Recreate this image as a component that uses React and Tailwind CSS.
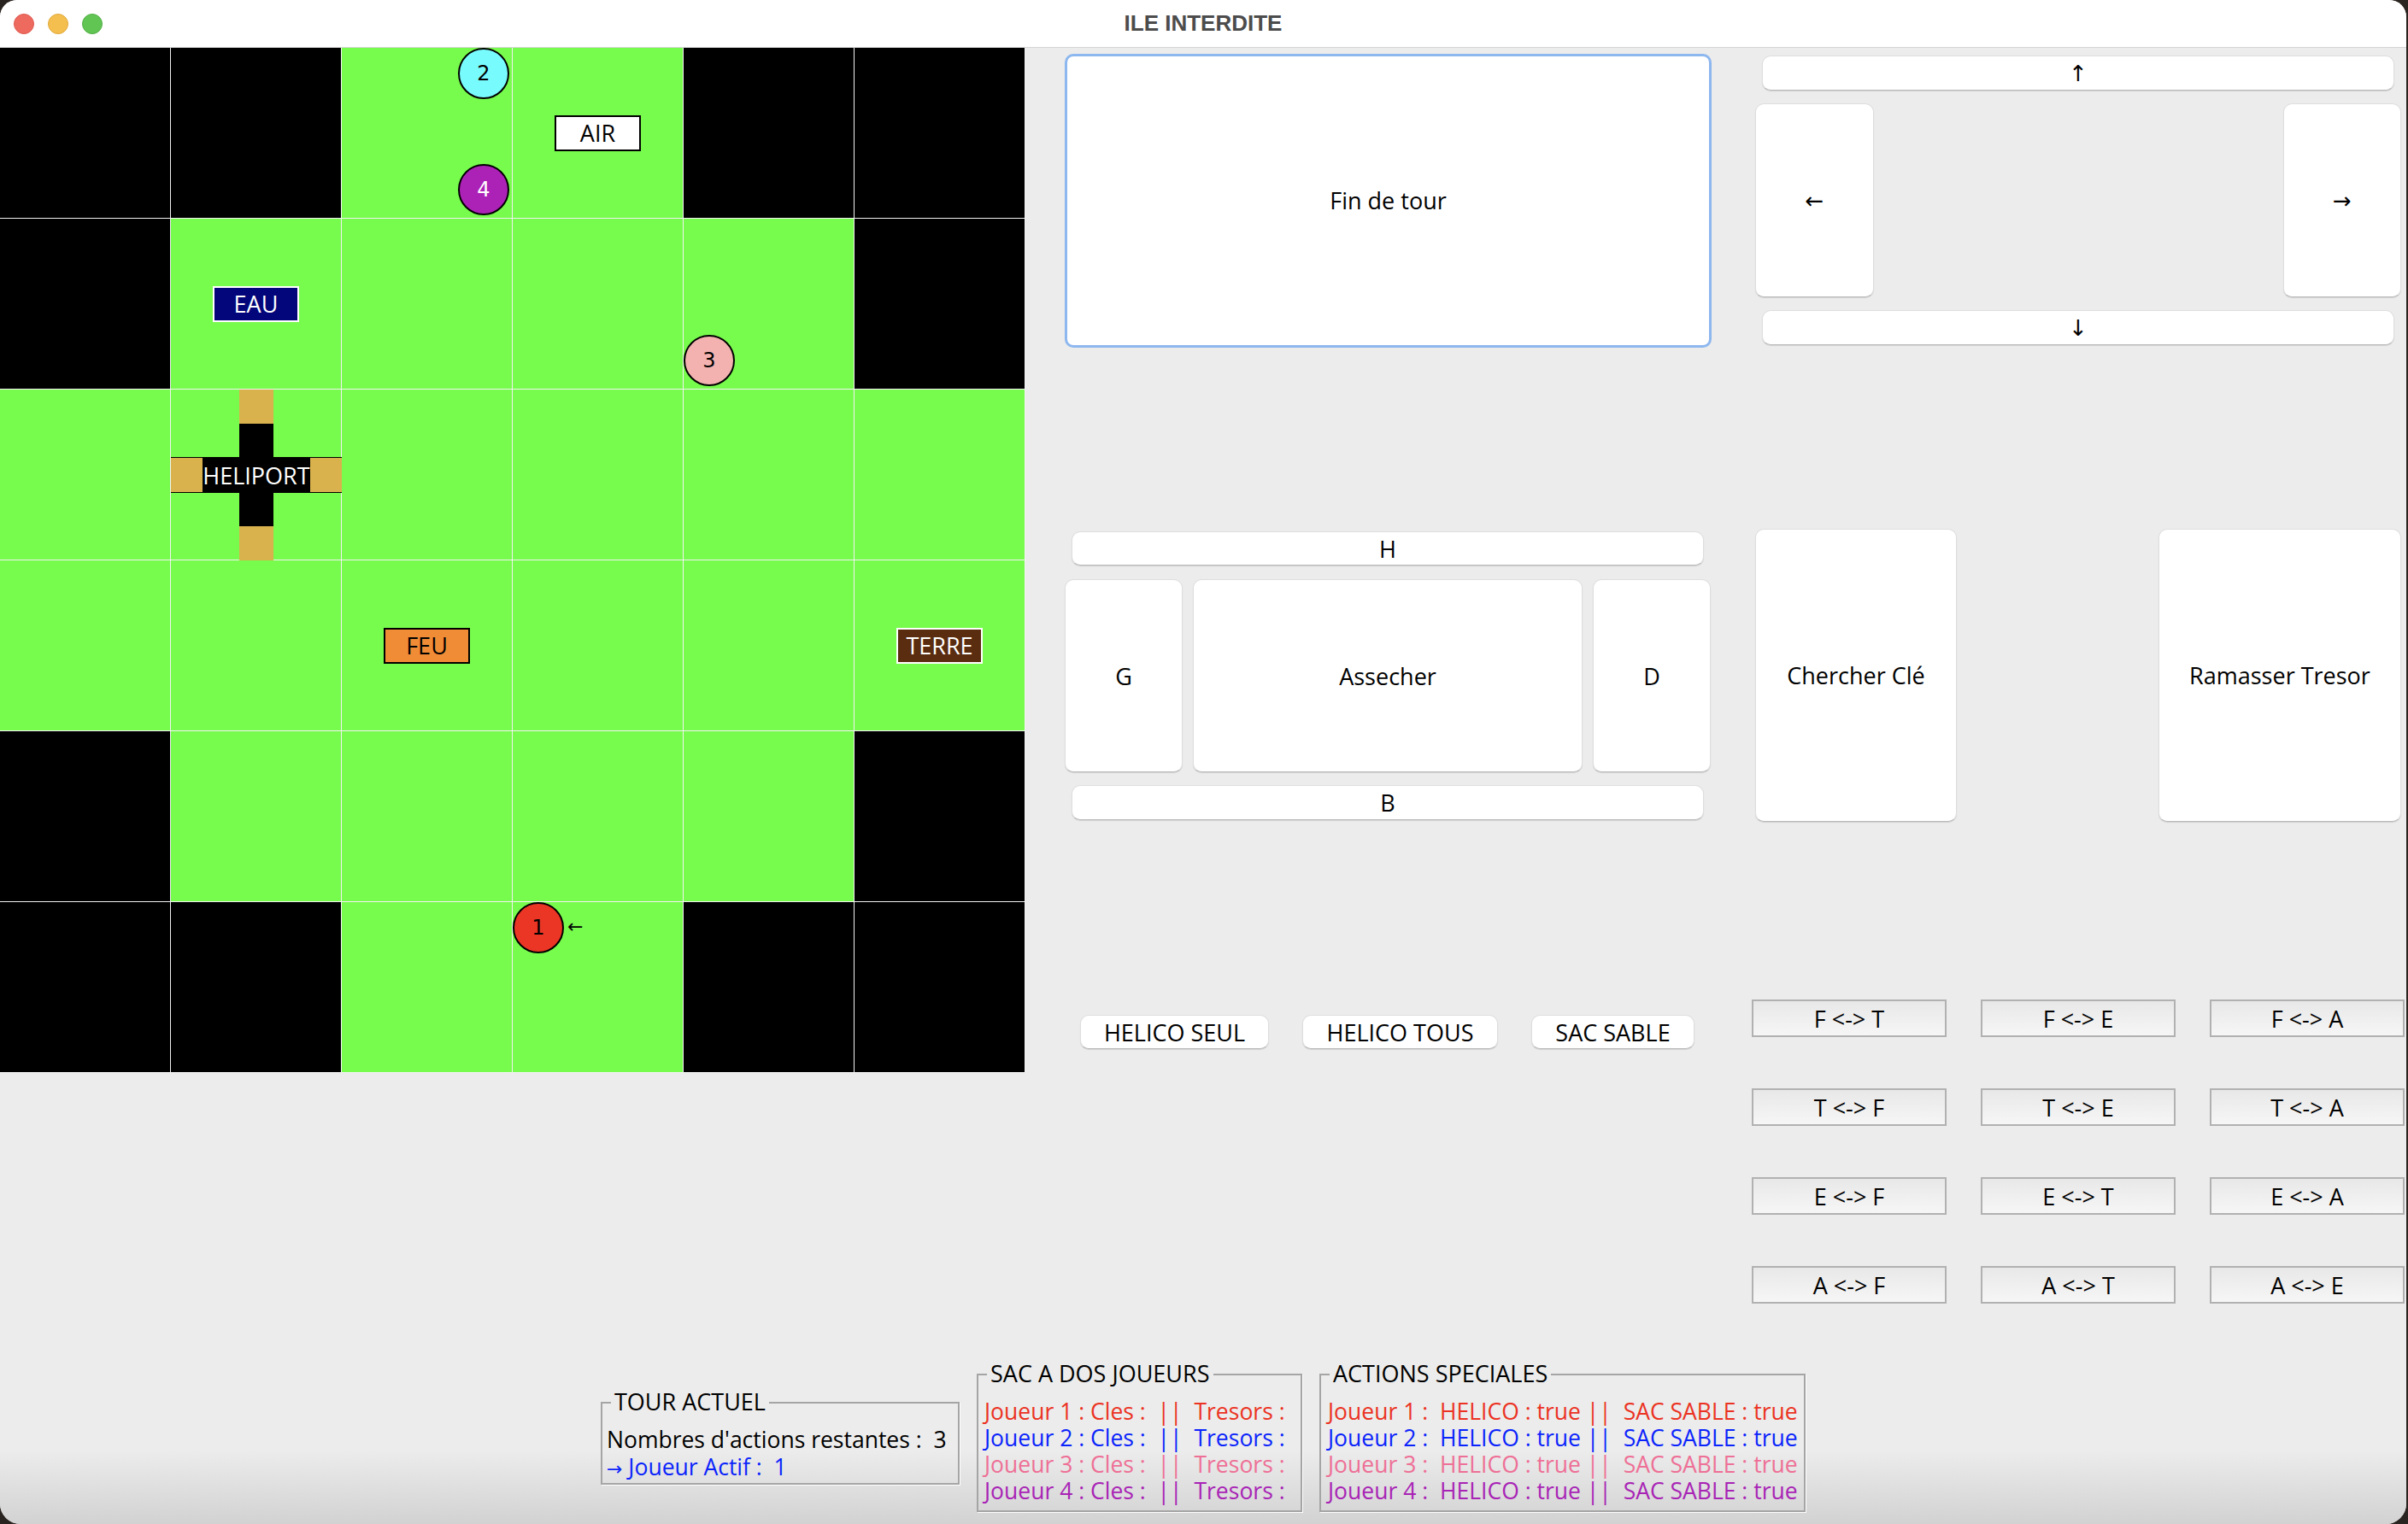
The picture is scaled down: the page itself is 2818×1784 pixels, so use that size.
import React from 'react';

const board = [
  'XXGGXX',
  'XGGGGX',
  'GGGGGG',
  'GGGGGG',
  'XGGGGX',
  'XXGGXX',
];

const labels = {
  '0-3': { text: 'AIR', cls: 'bg-white border-black text-black' },
  '1-1': { text: 'EAU', cls: 'bg-[#02067a] border-white text-white' },
  '3-2': { text: 'FEU', cls: 'bg-[#f08b36] border-black text-black' },
  '3-5': { text: 'TERRE', cls: 'bg-[#5a2c10] border-white text-white' },
};

const pawnPos = {
  tl: 'left-0 top-0',
  tr: 'left-[136px] top-0',
  bl: 'left-0 top-[136px]',
  br: 'left-[136px] top-[136px]',
};

const pawns = {
  '0-2': [
    { n: 2, pos: 'tr', cls: 'bg-[#78fbfd] text-black' },
    { n: 4, pos: 'br', cls: 'bg-[#ad22b6] text-white' },
  ],
  '1-4': [{ n: 3, pos: 'bl', cls: 'bg-[#f3b2b0] text-black' }],
  '5-3': [{ n: 1, pos: 'tl', cls: 'bg-[#eb3525] text-black', active: true }],
};

function Heliport() {
  return (
    <>
      <div className="absolute left-[80px] top-0 w-[40px] h-[200px] flex flex-col">
        <div className="h-[40px] bg-[#d9b24e]" />
        <div className="flex-1 bg-black" />
        <div className="h-[40px] bg-[#d9b24e]" />
      </div>
      <div className="absolute left-0 top-[79px] w-[200px] h-[42px] flex border-y border-black">
        <div className="w-[40px] bg-[#d9b24e]" />
        <div className="flex-1 bg-black flex items-center justify-center text-white text-[27px] leading-none">HELIPORT</div>
        <div className="w-[40px] bg-[#d9b24e]" />
      </div>
    </>
  );
}

function Cell({ r, c, kind }) {
  const key = `${r}-${c}`;
  const label = labels[key];
  return (
    <div className={`relative w-[200px] h-[200px] border-r border-b border-[#f2f2f2] flex items-center justify-center ${kind === 'G' ? 'bg-[#77fb4d]' : 'bg-black'}`}>
      {label && (
        <div className={`w-[101px] h-[42px] border-2 flex items-center justify-center text-[27px] leading-none ${label.cls}`}>{label.text}</div>
      )}
      {key === '2-1' && <Heliport />}
      {(pawns[key] || []).map((p) => (
        <React.Fragment key={p.n}>
          <div className={`absolute ${pawnPos[p.pos]} w-[60px] h-[60px] rounded-full border-2 border-black flex items-center justify-center font-['DejaVu_Sans',sans-serif] text-[24px] leading-none ${p.cls}`}>{p.n}</div>
          {p.active && <span className="absolute left-[64px] top-[18px] text-[22px] leading-none text-black font-['DejaVu_Sans',sans-serif]">←</span>}
        </React.Fragment>
      ))}
    </div>
  );
}

function Btn({ className = '', children }) {
  return (
    <button className={`flex items-center justify-center bg-white rounded-[10px] border border-[#dedede] border-b-[#b9b9b9] shadow-[0_1px_1px_rgba(0,0,0,0.12)] text-[27px] text-black leading-none ${className}`}>
      {children}
    </button>
  );
}

function Arrow({ children }) {
  return <span className="font-['DejaVu_Sans',sans-serif] text-[26px]">{children}</span>;
}

function SwapBtn({ children }) {
  return (
    <button className="h-[44px] border-2 border-[#b1b1b1] bg-linear-to-b from-[#e8e8e8] to-[#f6f6f6] flex items-center justify-center text-[27px] text-black leading-none whitespace-pre">
      {children}
    </button>
  );
}

function TitledBox({ title, className = '', children }) {
  return (
    <div className={`relative border-2 border-[#a5a5a5] shadow-[1px_1px_0_#ffffff] ${className}`}>
      <span className="absolute -top-[18px] left-[10px] px-[4px] bg-[#ececec] text-[27px] leading-[32px] text-black">{title}</span>
      {children}
    </div>
  );
}

const players = [
  { n: 1, color: 'text-[#eb3323]' },
  { n: 2, color: 'text-[#0b24fb]' },
  { n: 3, color: 'text-[#ee7096]' },
  { n: 4, color: 'text-[#a824b5]' },
];

const swaps = [
  'F <-> T', 'F <-> E', 'F <-> A',
  'T <-> F', 'T <-> E', 'T <-> A',
  'E <-> F', 'E <-> T', 'E <-> A',
  'A <-> F', 'A <-> T', 'A <-> E',
];

export default function App() {
  return (
    <div className="w-[2818px] h-[1784px] bg-[#2a2420] font-['Open_Sans',sans-serif]">
      <div className="w-[2816px] h-[1784px] rounded-t-[20px] rounded-b-[24px] overflow-hidden flex flex-col bg-[#ececec]">
        {/* title bar */}
        <div className="h-[56px] shrink-0 bg-white border-b border-[#d4d4d4] grid grid-cols-[1fr_auto_1fr] items-center">
          <div className="flex gap-[16px] pl-[16px]">
            <span className="w-[24px] h-[24px] rounded-full bg-[#ee6a5f] border border-[#dd5a50]" />
            <span className="w-[24px] h-[24px] rounded-full bg-[#f5bf4f] border border-[#dfa93f]" />
            <span className="w-[24px] h-[24px] rounded-full bg-[#61c554] border border-[#52ad46]" />
          </div>
          <div className="font-['Liberation_Sans',sans-serif] font-bold text-[26px] text-[#4c4c4c]">ILE INTERDITE</div>
          <div />
        </div>

        <div className="flex-1 flex flex-col bg-[linear-gradient(180deg,#ececec_95%,#d2d2d2)]">
          <div className="flex h-[1500px]">
            {/* board */}
            <div className="grid grid-cols-[repeat(6,200px)] self-start">
              {board.map((row, r) => row.split('').map((kind, c) => <Cell key={`${r}-${c}`} r={r} c={c} kind={kind} />))}
            </div>

            {/* controls */}
            <div className="grid grid-cols-[808px_808px] grid-rows-[500px_500px_500px]">
              <div className="pl-[46px] pt-[7px]">
                <button className="w-[757px] h-[344px] bg-white rounded-[10px] border-[3px] border-[#8db7ef] text-[27px] text-black">Fin de tour</button>
              </div>
              <div className="pl-[46px] pt-[9px]">
                <div className="w-[756px] h-[339px] flex flex-col gap-[15px]">
                  <Btn className="mx-[8px] h-[41px]"><Arrow>↑</Arrow></Btn>
                  <div className="flex justify-between h-[227px]">
                    <Btn className="w-[139px] h-full"><Arrow>←</Arrow></Btn>
                    <Btn className="w-[138px] h-full"><Arrow>→</Arrow></Btn>
                  </div>
                  <Btn className="mx-[8px] h-[41px]"><Arrow>↓</Arrow></Btn>
                </div>
              </div>

              <div className="pl-[46px] pt-[66px]">
                <div className="w-[756px] flex flex-col">
                  <Btn className="mx-[8px] h-[40px]">H</Btn>
                  <div className="flex gap-[12px] h-[226px] mt-[16px]">
                    <Btn className="w-[138px] h-full">G</Btn>
                    <Btn className="w-[456px] h-full">Assecher</Btn>
                    <Btn className="w-[138px] h-full">D</Btn>
                  </div>
                  <Btn className="mx-[8px] h-[41px] mt-[15px]">B</Btn>
                </div>
              </div>
              <div className="pl-[46px] pt-[63px] flex gap-[236px] items-start">
                <Btn className="w-[236px] h-[343px]">Chercher Clé</Btn>
                <Btn className="w-[284px] h-[343px]">Ramasser Tresor</Btn>
              </div>

              <div className="pl-[64px] pt-[132px] flex gap-[39px] items-start">
                <Btn className="w-[221px] h-[40px]">HELICO SEUL</Btn>
                <Btn className="w-[229px] h-[40px]">HELICO TOUS</Btn>
                <Btn className="w-[191px] h-[40px]">SAC SABLE</Btn>
              </div>
              <div className="pl-[42px] pt-[114px]">
                <div className="grid grid-cols-[228px_228px_228px] gap-x-[40px] gap-y-[60px]">
                  {swaps.map((s) => <SwapBtn key={s}>{s}</SwapBtn>)}
                </div>
              </div>
            </div>
          </div>

          {/* info panels */}
          <div className="flex justify-center items-center gap-[20px] mt-[52px] text-[26.5px] whitespace-pre">
            <TitledBox title="TOUR ACTUEL" className="w-[420px] h-[97px] pl-[5px] pt-[26px]">
              <div className="leading-[32px] text-black">Nombres d'actions restantes :  3</div>
              <div className="leading-[32px] text-[#0b24fb]"><span className="font-['DejaVu_Sans',sans-serif] text-[22px]">→</span> Joueur Actif :  1</div>
            </TitledBox>
            <TitledBox title="SAC A DOS JOUEURS" className="w-[381px] h-[162px] pl-[7px] pt-[27px]">
              {players.map((p) => (
                <div key={p.n} className={`${p.color} leading-[31px]`}>Joueur {p.n} : Cles :  ||  Tresors :</div>
              ))}
            </TitledBox>
            <TitledBox title="ACTIONS SPECIALES" className="w-[569px] h-[162px] pl-[8px] pt-[27px]">
              {players.map((p) => (
                <div key={p.n} className={`${p.color} leading-[31px]`}>Joueur {p.n} :  HELICO : true ||  SAC SABLE : true</div>
              ))}
            </TitledBox>
          </div>
        </div>
      </div>
    </div>
  );
}
